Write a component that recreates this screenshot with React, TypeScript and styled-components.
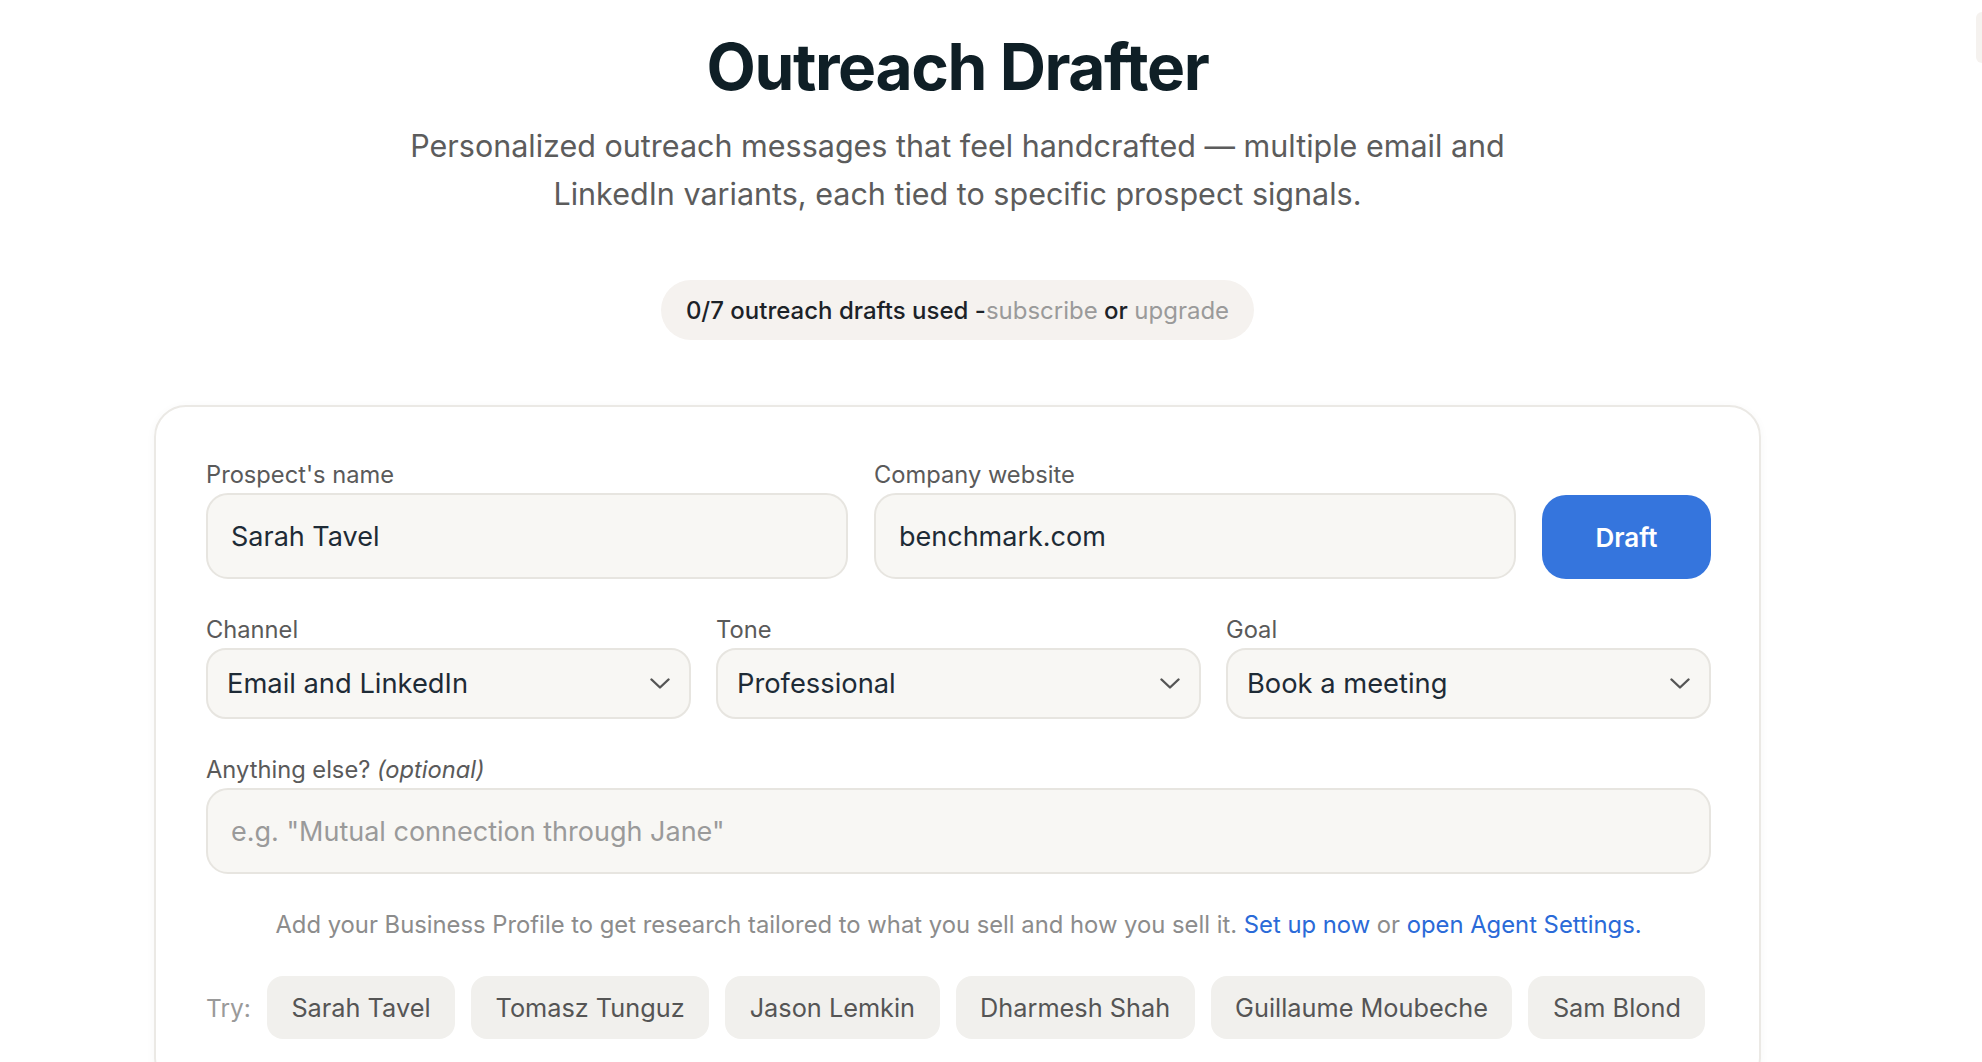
import styled, { createGlobalStyle } from "styled-components";

const GlobalStyle = createGlobalStyle`
  body {
    margin: 0;
    background: #ffffff;
    font-family: Inter, "Noto Sans", "Liberation Sans", sans-serif;
    color: #1e2b36;
  }
`;

type Option = { label: string; value: string };

const channels: Option[] = [{ label: "Email and LinkedIn", value: "both" }];
const tones: Option[] = [{ label: "Professional", value: "professional" }];
const goals: Option[] = [{ label: "Book a meeting", value: "meeting" }];

const suggestions = [
  "Sarah Tavel",
  "Tomasz Tunguz",
  "Jason Lemkin",
  "Dharmesh Shah",
  "Guillaume Moubeche",
  "Sam Blond",
];

const Chevron = () => (
  <svg width="20" height="11" viewBox="0 0 20 11" fill="none" stroke="#555" strokeWidth="2.4" strokeLinecap="round" strokeLinejoin="round">
    <path d="M1.5 1.5L10 9.5L18.5 1.5" />
  </svg>
);

const SelectField = ({ label, options }: { label: string; options: Option[] }) => (
  <Field>
    <Label>{label}</Label>
    <SelectBox>
      <span>{options[0].label}</span>
      <Chevron />
    </SelectBox>
  </Field>
);

const App = () => {
  return (
    <>
      <GlobalStyle />
      <Page>
        <Main>
          <Title>Outreach Drafter</Title>
          <Subtitle>
            Personalized outreach messages that feel handcrafted — multiple email and
            <br />
            LinkedIn variants, each tied to specific prospect signals.
          </Subtitle>
          <Usage>
            0/7 outreach drafts used -<Muted>subscribe</Muted> or <Muted>upgrade</Muted>
          </Usage>

          <Card>
            <TopRow>
              <Field>
                <Label>Prospect's name</Label>
                <TextInput defaultValue="Sarah Tavel" />
              </Field>
              <Field>
                <Label>Company website</Label>
                <TextInput defaultValue="benchmark.com" />
              </Field>
              <DraftButton>Draft</DraftButton>
            </TopRow>

            <SelectRow>
              <SelectField label="Channel" options={channels} />
              <SelectField label="Tone" options={tones} />
              <SelectField label="Goal" options={goals} />
            </SelectRow>

            <Field>
              <Label>
                Anything else? <em>(optional)</em>
              </Label>
              <TextInput placeholder={'e.g. "Mutual connection through Jane"'} />
            </Field>

            <Helper>
              Add your Business Profile to get research tailored to what you sell and how you sell it.{" "}
              <Link>Set up now</Link> or <Link>open Agent Settings.</Link>
            </Helper>

            <TryRow>
              <TryLabel>Try:</TryLabel>
              {suggestions.map((name) => (
                <Chip key={name}>{name}</Chip>
              ))}
            </TryRow>
          </Card>
        </Main>
        <Rail>
          <RailButton />
        </Rail>
      </Page>
    </>
  );
};

export default App;

const Page = styled.div`
  display: flex;
  width: 100%;
  min-height: 1062px;
  overflow: hidden;
`;

const Main = styled.main`
  flex: 1;
  display: flex;
  flex-direction: column;
  align-items: center;
  padding-top: 27px;
`;

const Rail = styled.aside`
  width: 67px;
  display: flex;
  justify-content: flex-end;
  align-items: flex-start;
`;

const RailButton = styled.div`
  width: 6px;
  height: 51px;
  margin-top: 12px;
  background: #f5f2ef;
  border-radius: 25px 0 0 25px;
`;

const Title = styled.h1`
  margin: 0;
  font-size: 64px;
  line-height: 80px;
  font-weight: 700;
  letter-spacing: -1.4px;
  color: #0f1f26;
`;

const Subtitle = styled.p`
  margin: 15px 0 0;
  font-size: 30.5px;
  line-height: 48px;
  color: #5c5c5c;
  text-align: center;
`;

const Usage = styled.div`
  margin-top: 62px;
  height: 60px;
  padding: 0 25px;
  display: flex;
  align-items: center;
  border-radius: 30px;
  background: #f5f2ef;
  font-size: 24px;
  font-weight: 500;
  color: #1c2228;
  white-space: pre;
`;

const Muted = styled.span`
  color: #9a9a9a;
  font-weight: 400;
`;

const Card = styled.section`
  margin-top: 65px;
  width: 1607px;
  box-sizing: border-box;
  padding: 54px 48px 49px 50px;
  border: 2px solid #ebe9e5;
  border-radius: 32px;
  box-shadow: 0 2px 10px rgba(0, 0, 0, 0.04);
  display: flex;
  flex-direction: column;
  gap: 37px;
`;

const TopRow = styled.div`
  display: flex;
  align-items: flex-end;
  gap: 26px;
`;

const SelectRow = styled.div`
  display: grid;
  grid-template-columns: repeat(3, 1fr);
  gap: 25px;
`;

const Field = styled.div`
  flex: 1;
  display: flex;
  flex-direction: column;
  gap: 4px;
  min-width: 0;
`;

const Label = styled.label`
  font-size: 23.7px;
  line-height: 28px;
  color: #5a5a5a;

  em {
    font-style: italic;
  }
`;

const TextInput = styled.input`
  height: 86px;
  box-sizing: border-box;
  padding: 0 23px;
  border: 2px solid #e7e5e0;
  border-radius: 22px;
  background: #f8f7f4;
  font-family: inherit;
  font-size: 27px;
  color: #1e2b36;
  outline: none;

  &::placeholder {
    color: #9a9a9a;
  }
`;

const SelectBox = styled.div`
  height: 71px;
  box-sizing: border-box;
  padding: 0 19px 0 19px;
  border: 2px solid #e7e5e0;
  border-radius: 20px;
  background: #f8f7f4;
  display: flex;
  align-items: center;
  justify-content: space-between;
  font-size: 27.3px;
  color: #1e2b36;
`;

const DraftButton = styled.button`
  width: 169px;
  height: 84px;
  border: none;
  border-radius: 24px;
  background: #3575dd;
  color: #ffffff;
  font-family: inherit;
  font-size: 26px;
  font-weight: 600;
  cursor: pointer;
`;

const Helper = styled.p`
  margin: 0;
  text-align: center;
  font-size: 23.8px;
  line-height: 28px;
  color: #8c8c8c;
`;

const Link = styled.a`
  color: #2a6ad8;
  cursor: pointer;
`;

const TryRow = styled.div`
  display: flex;
  align-items: center;
  gap: 16px;
`;

const TryLabel = styled.span`
  font-size: 24.5px;
  color: #9a9a9a;
  white-space: nowrap;
`;

const Chip = styled.button`
  flex-shrink: 0;
  height: 63px;
  padding: 0 24.5px;
  border: none;
  border-radius: 16px;
  background: #f1f0ed;
  font-family: inherit;
  font-size: 25.3px;
  color: #555555;
  white-space: nowrap;
  cursor: pointer;
`;
